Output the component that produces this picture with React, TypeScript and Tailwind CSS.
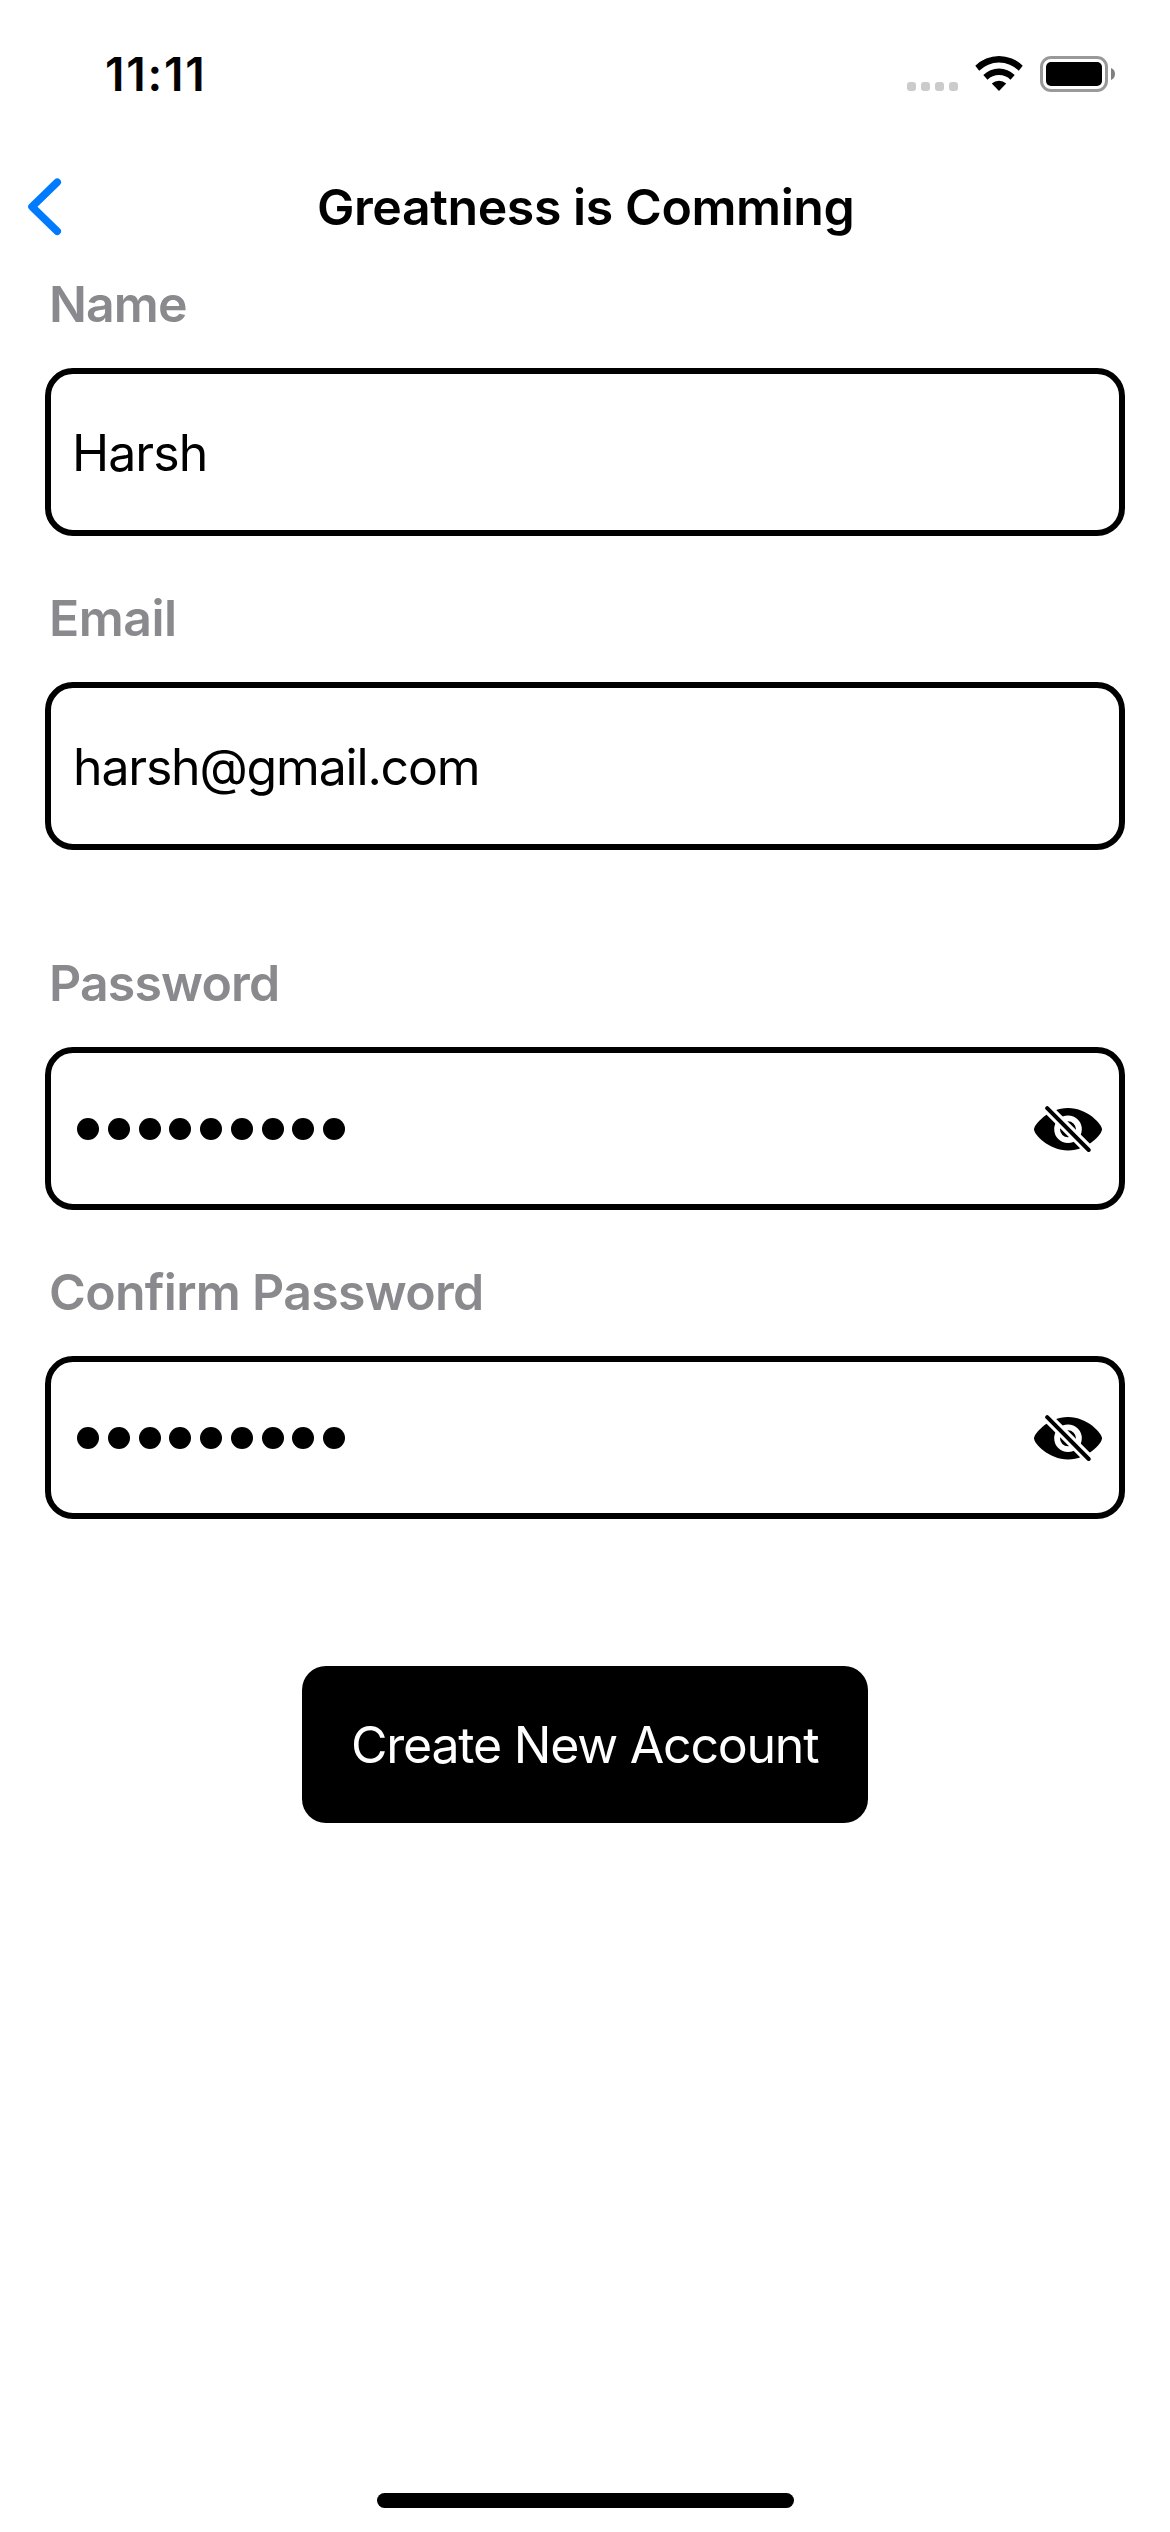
import React from "react";

function StatusBar() {
  return (
    <div className="flex h-[132px] items-start justify-between pl-[105px] pr-[54px]">
      <div className="mt-[46px] text-[46px] leading-[56px] font-semibold tracking-[1.82px]">11:11</div>
      <div className="mt-[55px] flex h-[37px] items-start">
        <div className="mt-[27px] mr-[17px] flex gap-[5px]">
          {[0, 1, 2, 3].map((i) => (
            <span key={i} className="size-[9px] rounded-[3px] bg-[#cbcbcb]" />
          ))}
        </div>
        <svg className="mr-[17px] h-9 w-12" viewBox="0 0 48 36">
          <path d="M0.3 10.7A33.5 33.5 0 0 1 47.7 10.7L43.8 15.7A28 28 0 0 0 4.2 15.7Z" />
          <path d="M8.3 20A22.2 22.2 0 0 1 39.7 20L35.5 24.7A16.7 16.7 0 0 0 12.5 24.7Z" />
          <path d="M16.8 28.6A10.4 10.4 0 0 1 31.2 28.6L24 36Z" />
        </svg>
        <svg className="mt-px h-9 w-[76px]" viewBox="0 0 76 36">
          <rect x="1.5" y="1.5" width="65" height="33" rx="9.5" fill="none" stroke="#999999" strokeWidth="3" />
          <rect x="6" y="6" width="56" height="24" rx="5" />
          <path d="M71 12C73.6 13 75 15.3 75 18C75 20.7 73.6 23 71 24Z" fill="#808080" />
        </svg>
      </div>
    </div>
  );
}

function Header() {
  return (
    <header className="flex h-[142px] items-start">
      <svg className="mt-[45px] ml-[27px] h-[60px] w-[36px]" viewBox="0 0 36 60">
        <path d="M30.2 5.2L5 29.7L30.2 54.3" fill="none" stroke="#007aff" strokeWidth="7.6" strokeLinecap="round" strokeLinejoin="round" />
      </svg>
      <h1 className="mt-[45px] ml-[254px] text-[50px] leading-[60px] font-semibold tracking-[-0.42px] whitespace-nowrap">
        Greatness is Comming
      </h1>
    </header>
  );
}

function EyeSlash() {
  return (
    <svg className="h-[46px] w-[70px]" viewBox="0 0 70 46">
      <path d="M1 23.3C1 18.5 15.5 2 35 2C54.5 2 69 18.5 69 23.3C69 28.5 54.5 44.500 35 44.500C15.500 44.500 1 28.500 1 23.300Z" />
      <circle cx="35" cy="23.3" r="10.9" fill="black" stroke="white" strokeWidth="5.8" />
      <path d="M7.5 -4.5L62.5 50.5" stroke="white" strokeWidth="10.2" />
      <path d="M14.2 2.2L55.700 44" stroke="black" strokeWidth="4" strokeLinecap="round" />
    </svg>
  );
}

function Label({ text, className }: { text: string; className: string }) {
  return (
    <label className={`mb-[34px] ml-1 block text-[50px] leading-[60px] font-semibold text-[#8a8a8e] ${className}`}>
      {text}
    </label>
  );
}

function TextBox({ value, className }: { value: string; className: string }) {
  return (
    <div className="flex h-[168px] items-center rounded-[28px] border-6 border-black pt-[2px]">
      <span className={`text-[50px] leading-[60px] ${className}`}>{value}</span>
    </div>
  );
}

function SecretBox() {
  return (
    <div className="flex h-[163px] items-center justify-between rounded-[28px] border-6 border-black pt-px pr-4 pl-[26px]">
      <div className="flex gap-[8.75px]">
        {Array.from({ length: 9 }, (_, i) => (
          <span key={i} className="size-[22px] rounded-full bg-black" />
        ))}
      </div>
      <EyeSlash />
    </div>
  );
}

export default function App() {
  return (
    <div className="flex h-[2532px] w-[1170px] flex-col bg-white font-['Inter',sans-serif] text-black">
      <StatusBar />
      <Header />
      <main className="flex flex-col px-[45px]">
        <Label text="Name" className="tracking-[-0.9px]" />
        <TextBox value="Harsh" className="ml-[21px] tracking-[-0.94px]" />
        <Label text="Email" className="mt-[52px] tracking-[-0.52px]" />
        <TextBox value="harsh@gmail.com" className="ml-[22px] tracking-[-1.19px]" />
        <Label text="Password" className="mt-[103px] tracking-[-0.84px]" />
        <SecretBox />
        <Label text="Confirm Password" className="mt-[52px] tracking-[-0.7px]" />
        <SecretBox />
        <button className="mt-[147px] flex h-[157px] w-[566px] items-center self-center rounded-[24px] bg-black pt-px pl-[49px] text-[50px] leading-[60px] tracking-[-1.22px] whitespace-nowrap text-white">
          Create New Account
        </button>
      </main>
      <div className="mt-auto mb-6 h-[15px] w-[417px] self-center rounded-full bg-black" />
    </div>
  );
}
